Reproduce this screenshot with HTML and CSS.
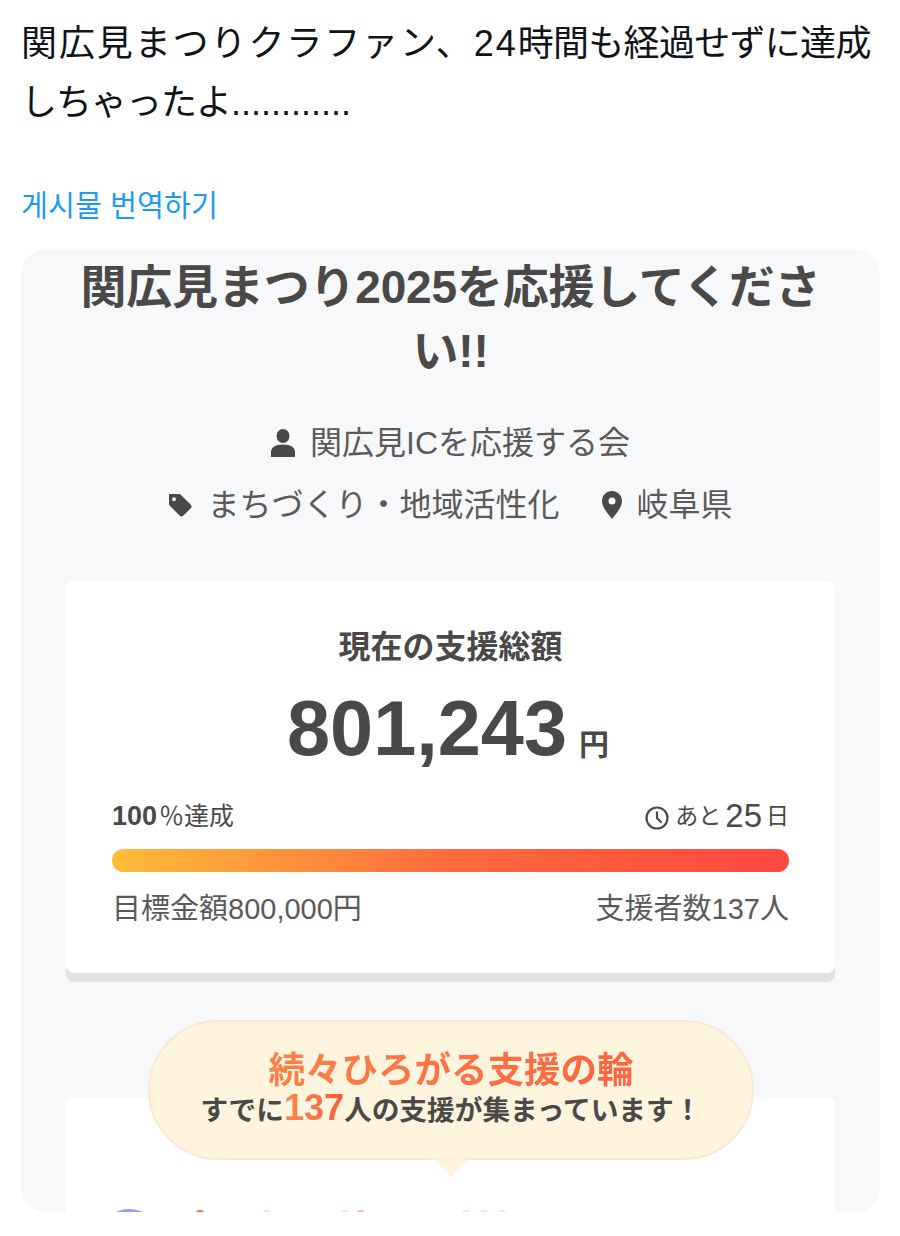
FILE: index.html
```html
<!DOCTYPE html>
<html lang="ja">
<head>
    <meta charset="UTF-8">
    <title>関広見まつり</title>
    <link rel="stylesheet" href="styles.css">
</head>
<body>
    <p class="post-text"><span class="wide">関広見まつりクラファン、</span><span class="digits">24</span><span class="tight">時間も経過せずに達成</span><span class="kana">しちゃったよ</span>............</p>
    <a class="translate" href="#" lang="ko">게시물 번역하기</a>

    <div class="shot">
        <h1 class="title">関広見まつり2025を応援してください!!</h1>

        <div class="meta">
            <svg class="icon person" viewBox="0 0 24 28"><ellipse cx="12" cy="7" rx="6.500" ry="7"/><path d="M0 28v-5c0-4.500 4-7.500 12-7.500s12 3 12 7.500v5z"/></svg>
            <span>関広見ICを応援する会</span>
        </div>
        <div class="meta meta-second">
            <svg class="icon tag" viewBox="0 0 24 24"><path fill-rule="evenodd" d="M2 1h9c.7 0 1.300.3 1.800.8l10 10c1 1 1 2.400 0 3.400l-7.600 7.600c-1 1-2.400 1-3.400 0l-10-10C1.300 12.300 1 11.700 1 11V2c0-.6.400-1 1-1zm4 3.200a2 2 0 1 0 0 4 2 2 0 0 0 0-4z"/></svg>
            <span class="cat">まちづくり・地域活性化</span>
            <svg class="icon pin" viewBox="0 0 20 28"><path fill-rule="evenodd" d="M10 0C4.300 0 0 4.400 0 10c0 7 7.500 14.500 10 18 2.500-3.500 10-11 10-18C20 4.400 15.700 0 10 0zm0 6.500a3.500 3.500 0 1 1 0 7 3.500 3.500 0 0 1 0-7z"/></svg>
            <span>岐阜県</span>
        </div>

        <div class="total-card">
            <div class="total-label">現在の支援総額</div>
            <div class="total-amount">801,243<span class="yen">円</span></div>
            <div class="row row-top">
                <span class="percent"><b>100</b>％達成</span>
                <span class="left">
                    <svg class="clock" viewBox="0 0 24 24"><circle cx="12" cy="12" r="10.500"/><path d="M12 5.500V12l4.500 4.500"/></svg>
                    <span>あと</span><span class="days">25</span><span>日</span>
                </span>
            </div>
            <div class="bar"></div>
            <div class="row row-bottom">
                <span>目標金額800,000円</span>
                <span>支援者数137人</span>
            </div>
        </div>

        <div class="lower-card">
            <div class="avatar"></div>
            <div class="cut-marks">
                <i class="mark"></i>
                <i class="mark pale"></i>
                <i class="mark pale"></i>
                <i class="mark soft"></i>
                <i class="mark pale"></i>
                <i class="mark pale"></i>
                <i class="mark pale"></i>
            </div>
        </div>

        <div class="bubble">
            <div class="bubble-head">続々ひろがる支援の輪</div>
            <div class="bubble-sub">すでに<span class="count">137</span>人の支援が集まっています！</div>
        </div>
    </div>
</body>
</html>
```

FILE: styles.css
```css
* {
    margin: 0;
    padding: 0;
    box-sizing: border-box;
}

body {
    width: 900px;
    height: 1236px;
    background-color: #fff;
    padding: 14px 20px 0 21px;
    font-family: "Liberation Sans", "Noto Sans CJK JP", sans-serif;
    overflow: hidden;
}

.post-text {
    font-size: 36px;
    line-height: 59px;
    color: #0f1419;
    width: 860px;
}

.wide {
    letter-spacing: 1.9px;
}

.digits {
    letter-spacing: 2px;
}

.tight {
    letter-spacing: -0.7px;
}

.kana {
    letter-spacing: -1px;
}

.translate {
    display: block;
    margin-top: 51px;
    font-family: "Noto Sans CJK KR", sans-serif;
    font-size: 29.3px;
    line-height: 40px;
    color: #1d9bf0;
    text-decoration: none;
}

.shot {
    position: relative;
    margin-top: 27px;
    width: 859px;
    height: 962px;
    background-color: #f7f8fa;
    border-radius: 24px;
    overflow: hidden;
    padding: 5px 45px 0;
    color: #4b4948;
}

.title {
    font-size: 46px;
    line-height: 64px;
    font-weight: 700;
    text-align: center;
    letter-spacing: -0.2px;
}

.meta {
    display: flex;
    justify-content: center;
    align-items: center;
    gap: 15px;
    margin-top: 37px;
    font-size: 32px;
    line-height: 46px;
    color: #5a5a5a;
}

.meta-second {
    margin-top: 16px;
}

.icon {
    fill: #4b4948;
    flex: none;
}

.person {
    width: 24px;
    height: 28px;
}

.tag {
    width: 24px;
    height: 24px;
}

.pin {
    width: 20px;
    height: 28px;
}

.cat {
    margin-right: 27px;
}

.total-card {
    margin-top: 53px;
    height: 392px;
    background-color: #fff;
    border-radius: 8px;
    box-shadow: 0 9px 0 #e2e2e2;
    padding: 44px 46px 0;
}

.total-label {
    font-size: 32px;
    line-height: 44px;
    font-weight: 700;
    text-align: center;
}

.total-amount {
    margin-top: 13px;
    padding-right: 5px;
    font-size: 77.5px;
    line-height: 92px;
    font-weight: 700;
    text-align: center;
}

.yen {
    margin-left: 12px;
    font-size: 30px;
}

.row {
    display: flex;
    justify-content: space-between;
    align-items: flex-end;
}

.row-top {
    margin-top: 7px;
    font-size: 25px;
    line-height: 36px;
}

.percent b {
    font-size: 27px;
    margin-right: 2px;
}

.left {
    display: flex;
    align-items: flex-end;
    gap: 4px;
    font-size: 23px;
}

.clock {
    width: 24px;
    height: 24px;
    margin-bottom: 4px;
    margin-right: 2px;
    fill: none;
    stroke: #4b4948;
    stroke-width: 2.200;
}

.days {
    font-size: 33px;
}

.bar {
    margin-top: 15px;
    height: 23px;
    border-radius: 12px;
    background: linear-gradient(90deg, #ffbc3a 0%, #ff6a3d 50%, #ff4840 100%);
}

.row-bottom {
    margin-top: 15px;
    font-size: 29px;
    line-height: 44px;
    color: #5a5a5a;
}

.lower-card {
    position: absolute;
    left: 45px;
    top: 847px;
    width: 769px;
    height: 200px;
    background-color: #fff;
    border-radius: 8px;
}

.avatar {
    position: absolute;
    left: 33px;
    top: 112px;
    width: 60px;
    height: 60px;
    border-radius: 50%;
    background-color: #8ea2f2;
}

/* only the tops of the next card's heading show above the crop */
.cut-marks {
    position: absolute;
    left: 130px;
    top: 113px;
    display: flex;
}

.mark {
    display: block;
    width: 8px;
    height: 3px;
    border-radius: 4px 4px 0 0;
    background-color: #ff6a3d;
}

.mark.pale {
    background-color: #fde3d6;
}

.mark.soft {
    background-color: #fbb9a0;
}

.mark:nth-child(2) {
    margin-left: 59px;
}

.mark:nth-child(3) {
    margin-left: 70px;
}

.mark:nth-child(4) {
    margin-left: 8px;
}

.mark:nth-child(5) {
    margin-left: 97px;
}

.mark:nth-child(n+6) {
    margin-left: 10px;
}

.bubble {
    position: absolute;
    left: 127px;
    top: 770px;
    width: 606px;
    height: 140px;
    border-radius: 70px;
    background-color: #fff4de;
    border: 2px solid #fbe8d3;
    text-align: center;
    padding-top: 27px;
}

.bubble::after {
    content: "";
    position: absolute;
    left: 284px;
    bottom: -19px;
    width: 34px;
    height: 18px;
    background-color: #fff4de;
    clip-path: polygon(0 0, 100% 0, 50% 100%);
}

.bubble-head {
    font-size: 36.5px;
    line-height: 44px;
    font-weight: 700;
    background: linear-gradient(90deg, #f98b4b, #ff5a3c);
    -webkit-background-clip: text;
    background-clip: text;
    color: transparent;
}

.bubble-sub {
    margin-top: -3px;
    font-size: 27.7px;
    line-height: 36px;
    font-weight: 700;
    color: #4b4948;
}

.count {
    font-size: 36px;
    background: linear-gradient(90deg, #f98b4b, #ff5a3c);
    -webkit-background-clip: text;
    background-clip: text;
    color: transparent;
}
```
